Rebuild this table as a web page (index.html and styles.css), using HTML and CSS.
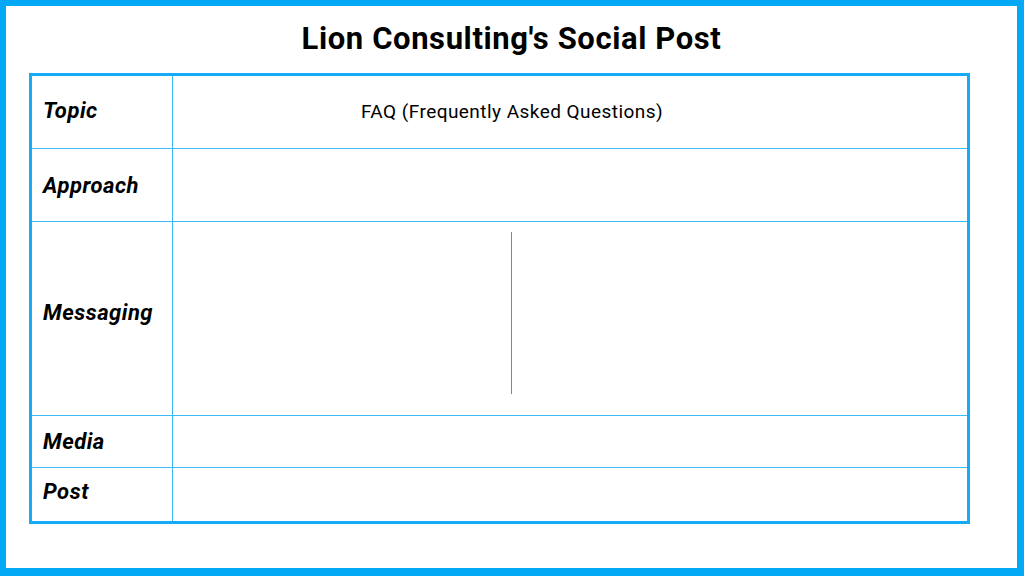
FILE: index.html
```html
<!DOCTYPE html>
<html>
<head>
<meta charset="utf-8">
<link rel="stylesheet" href="styles.css">
</head>
<body>
<div class="frame">
  <h1 class="title">Lion Consulting's Social Post</h1>
  <div class="grid">
    <div class="row row-topic">
      <div class="label label-topic">Topic</div>
      <div class="cell cell-center">FAQ (Frequently Asked Questions)</div>
    </div>
    <div class="row row-approach">
      <div class="label">Approach</div>
      <div class="cell"></div>
    </div>
    <div class="row row-messaging">
      <div class="label label-msg">Messaging</div>
      <div class="cell cell-msg"><div class="msg-split"></div></div>
    </div>
    <div class="row row-media">
      <div class="label">Media</div>
      <div class="cell"></div>
    </div>
    <div class="row row-post">
      <div class="label label-post">Post</div>
      <div class="cell"></div>
    </div>
  </div>
</div>
</body>
</html>
```

FILE: styles.css
```css
* { box-sizing: border-box; }
html, body { margin: 0; padding: 0; }
body {
  width: 1024px;
  height: 576px;
  background: #fff;
  font-family: Roboto, "Liberation Sans", sans-serif;
  color: #000;
}
.frame {
  width: 1024px;
  height: 576px;
  border-style: solid;
  border-color: #03a9f4;
  border-width: 6px 7px 8px 6px;
  padding-top: 15px;
}
.title {
  margin: 0 0 16px 0;
  font-size: 31px;
  line-height: 36px;
  font-weight: 700;
  letter-spacing: 0.6px;
  text-align: center;
}
.grid {
  margin-left: 23px;
  width: 941px;
  height: 451px;
  border: 3px solid #14acf5;
  display: flex;
  flex-direction: column;
}
.row {
  display: flex;
  border-bottom: 1px solid #3cb9f6;
}
.row-topic { height: 73px; }
.row-approach { height: 73px; }
.row-messaging { height: 194px; }
.row-media { height: 52px; }
.row-post { height: 53px; border-bottom: none; }
.label {
  width: 141px;
  flex: none;
  border-right: 1px solid #3cb9f6;
  padding-left: 11px;
  display: flex;
  align-items: center;
  font-size: 22px;
  font-weight: 700;
  font-style: italic;
  letter-spacing: 0.5px;
}
.label-topic { padding-bottom: 3px; }
.label-msg { padding-bottom: 12px; }
.label-post { padding-bottom: 6px; }
.cell {
  flex: 1;
  display: flex;
  align-items: center;
}
.cell-center {
  justify-content: center;
  padding-right: 116px;
  padding-bottom: 2px;
  font-size: 19px;
  letter-spacing: 0.45px;
}
.cell-msg {
  align-items: stretch;
  padding: 10px 0 21px 0;
}
.msg-split {
  width: 339px;
  border-right: 1px solid #12acf5;
}
```
